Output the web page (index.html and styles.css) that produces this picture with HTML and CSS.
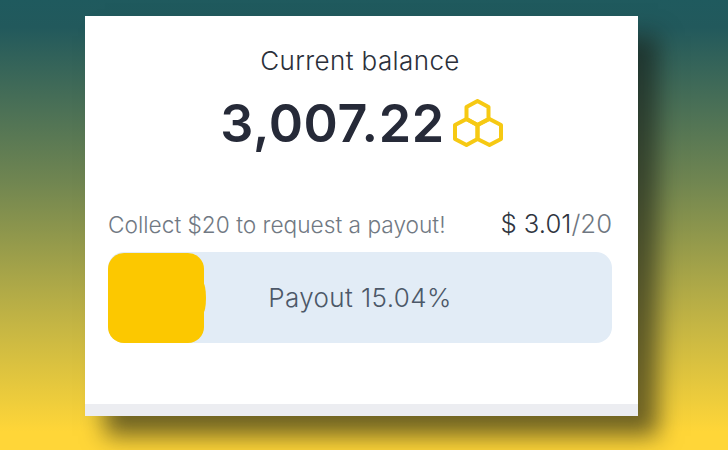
FILE: index.html
```html
<!DOCTYPE html>
<html lang="en">
<head>
    <meta charset="UTF-8">
    <meta name="viewport" content="width=device-width, initial-scale=1.0">
    <title>Current balance</title>
    <link rel="stylesheet" href="styles.css">
</head>
<body>
    <main class="card">
        <section class="balance">
            <h1 class="balance-title">Current balance</h1>
            <div class="balance-row">
                <span class="balance-value">3,007.22</span>
                <svg class="honey-icon" viewBox="0 0 50 48" aria-hidden="true">
                    <polygon points="24.5,2 35.5,8 35.5,20 24.5,26 13.5,20 13.5,8"/>
                    <polygon points="13.5,20 24.5,26 24.5,40 13.5,46 2,40 2,26"/>
                    <polygon points="36.5,20 48,26 48,40 36.5,46 24.5,40 24.5,26"/>
                </svg>
            </div>
        </section>

        <section class="payout">
            <div class="payout-head">
                <span class="payout-hint">Collect $20 to request a payout!</span>
                <span class="payout-amount">$ 3.01<span class="payout-goal">/20</span></span>
            </div>
            <div class="progress">
                <div class="progress-fill" style="width: 96px"></div>
                <span class="progress-label">Payout 15.04%</span>
            </div>
        </section>

        <div class="card-footer"></div>
    </main>
</body>
</html>
```

FILE: styles.css
```css
* {
  box-sizing: border-box;
}

html, body {
  height: 100%;
}

body {
  margin: 0;
  padding: 16px 90px 34px 85px;
  background: linear-gradient(180deg, #1f5a5e 0%, #22595c 6%, #6f8551 40%, #c4b544 72%, #ffd638 96%);
  font-family: "Inter", "Liberation Sans", sans-serif;
  overflow: hidden;
}

/* White panel with the heavy offset shadow */
.card {
  display: flex;
  flex-direction: column;
  height: 400px;
  background: #fff;
  box-shadow: 20px 20px 22px rgba(20, 25, 20, 0.6);
}

.balance {
  display: flex;
  flex-direction: column;
  align-items: center;
  padding-top: 28px;
}

.balance-title {
  margin: 0 3px 0 0;
  font-size: 26px;
  line-height: 34px;
  font-weight: 300;
  letter-spacing: 0.4px;
  color: #2b2f3a;
}

.balance-row {
  display: flex;
  align-items: center;
  gap: 8px;
  margin-top: 14px;
}

.balance-value {
  font-size: 52px;
  line-height: 64px;
  font-weight: 600;
  letter-spacing: 0.6px;
  color: #262a38;
}

.honey-icon {
  width: 50px;
  height: 48px;
  margin-top: -2px;
}

.honey-icon polygon {
  fill: none;
  stroke: #f6c913;
  stroke-width: 4;
  stroke-linejoin: round;
}

.payout {
  display: flex;
  flex-direction: column;
  gap: 10px;
  margin-top: 51px;
  padding: 0 26px 0 23px;
}

.payout-head {
  display: flex;
  justify-content: space-between;
  align-items: baseline;
  line-height: 34px;
}

.payout-hint {
  font-size: 22.7px;
  font-weight: 300;
  color: #717983;
}

.payout-amount {
  font-size: 25.7px;
  font-weight: 300;
  color: #2f3540;
}

.payout-goal {
  color: #6f7781;
}

.progress {
  position: relative;
  display: flex;
  align-items: center;
  justify-content: center;
  height: 91px;
  border-radius: 16px;
  background: #e2ecf6;
}

/* hand-painted looking bar, sits under the label */
.progress-fill {
  position: absolute;
  top: 1px;
  bottom: 0;
  left: 0;
  border-radius: 16px;
  background: #fcc800;
}

.progress-fill::after {
  content: "";
  position: absolute;
  top: 30px;
  right: -2px;
  width: 6px;
  height: 30px;
  border-radius: 50%;
  background: #fcc800;
}

.progress-label {
  position: relative;
  font-size: 26px;
  font-weight: 300;
  letter-spacing: 0.4px;
  color: #4c5868;
}

.card-footer {
  height: 12px;
  margin-top: auto;
  background: #ecedf1;
}
```
